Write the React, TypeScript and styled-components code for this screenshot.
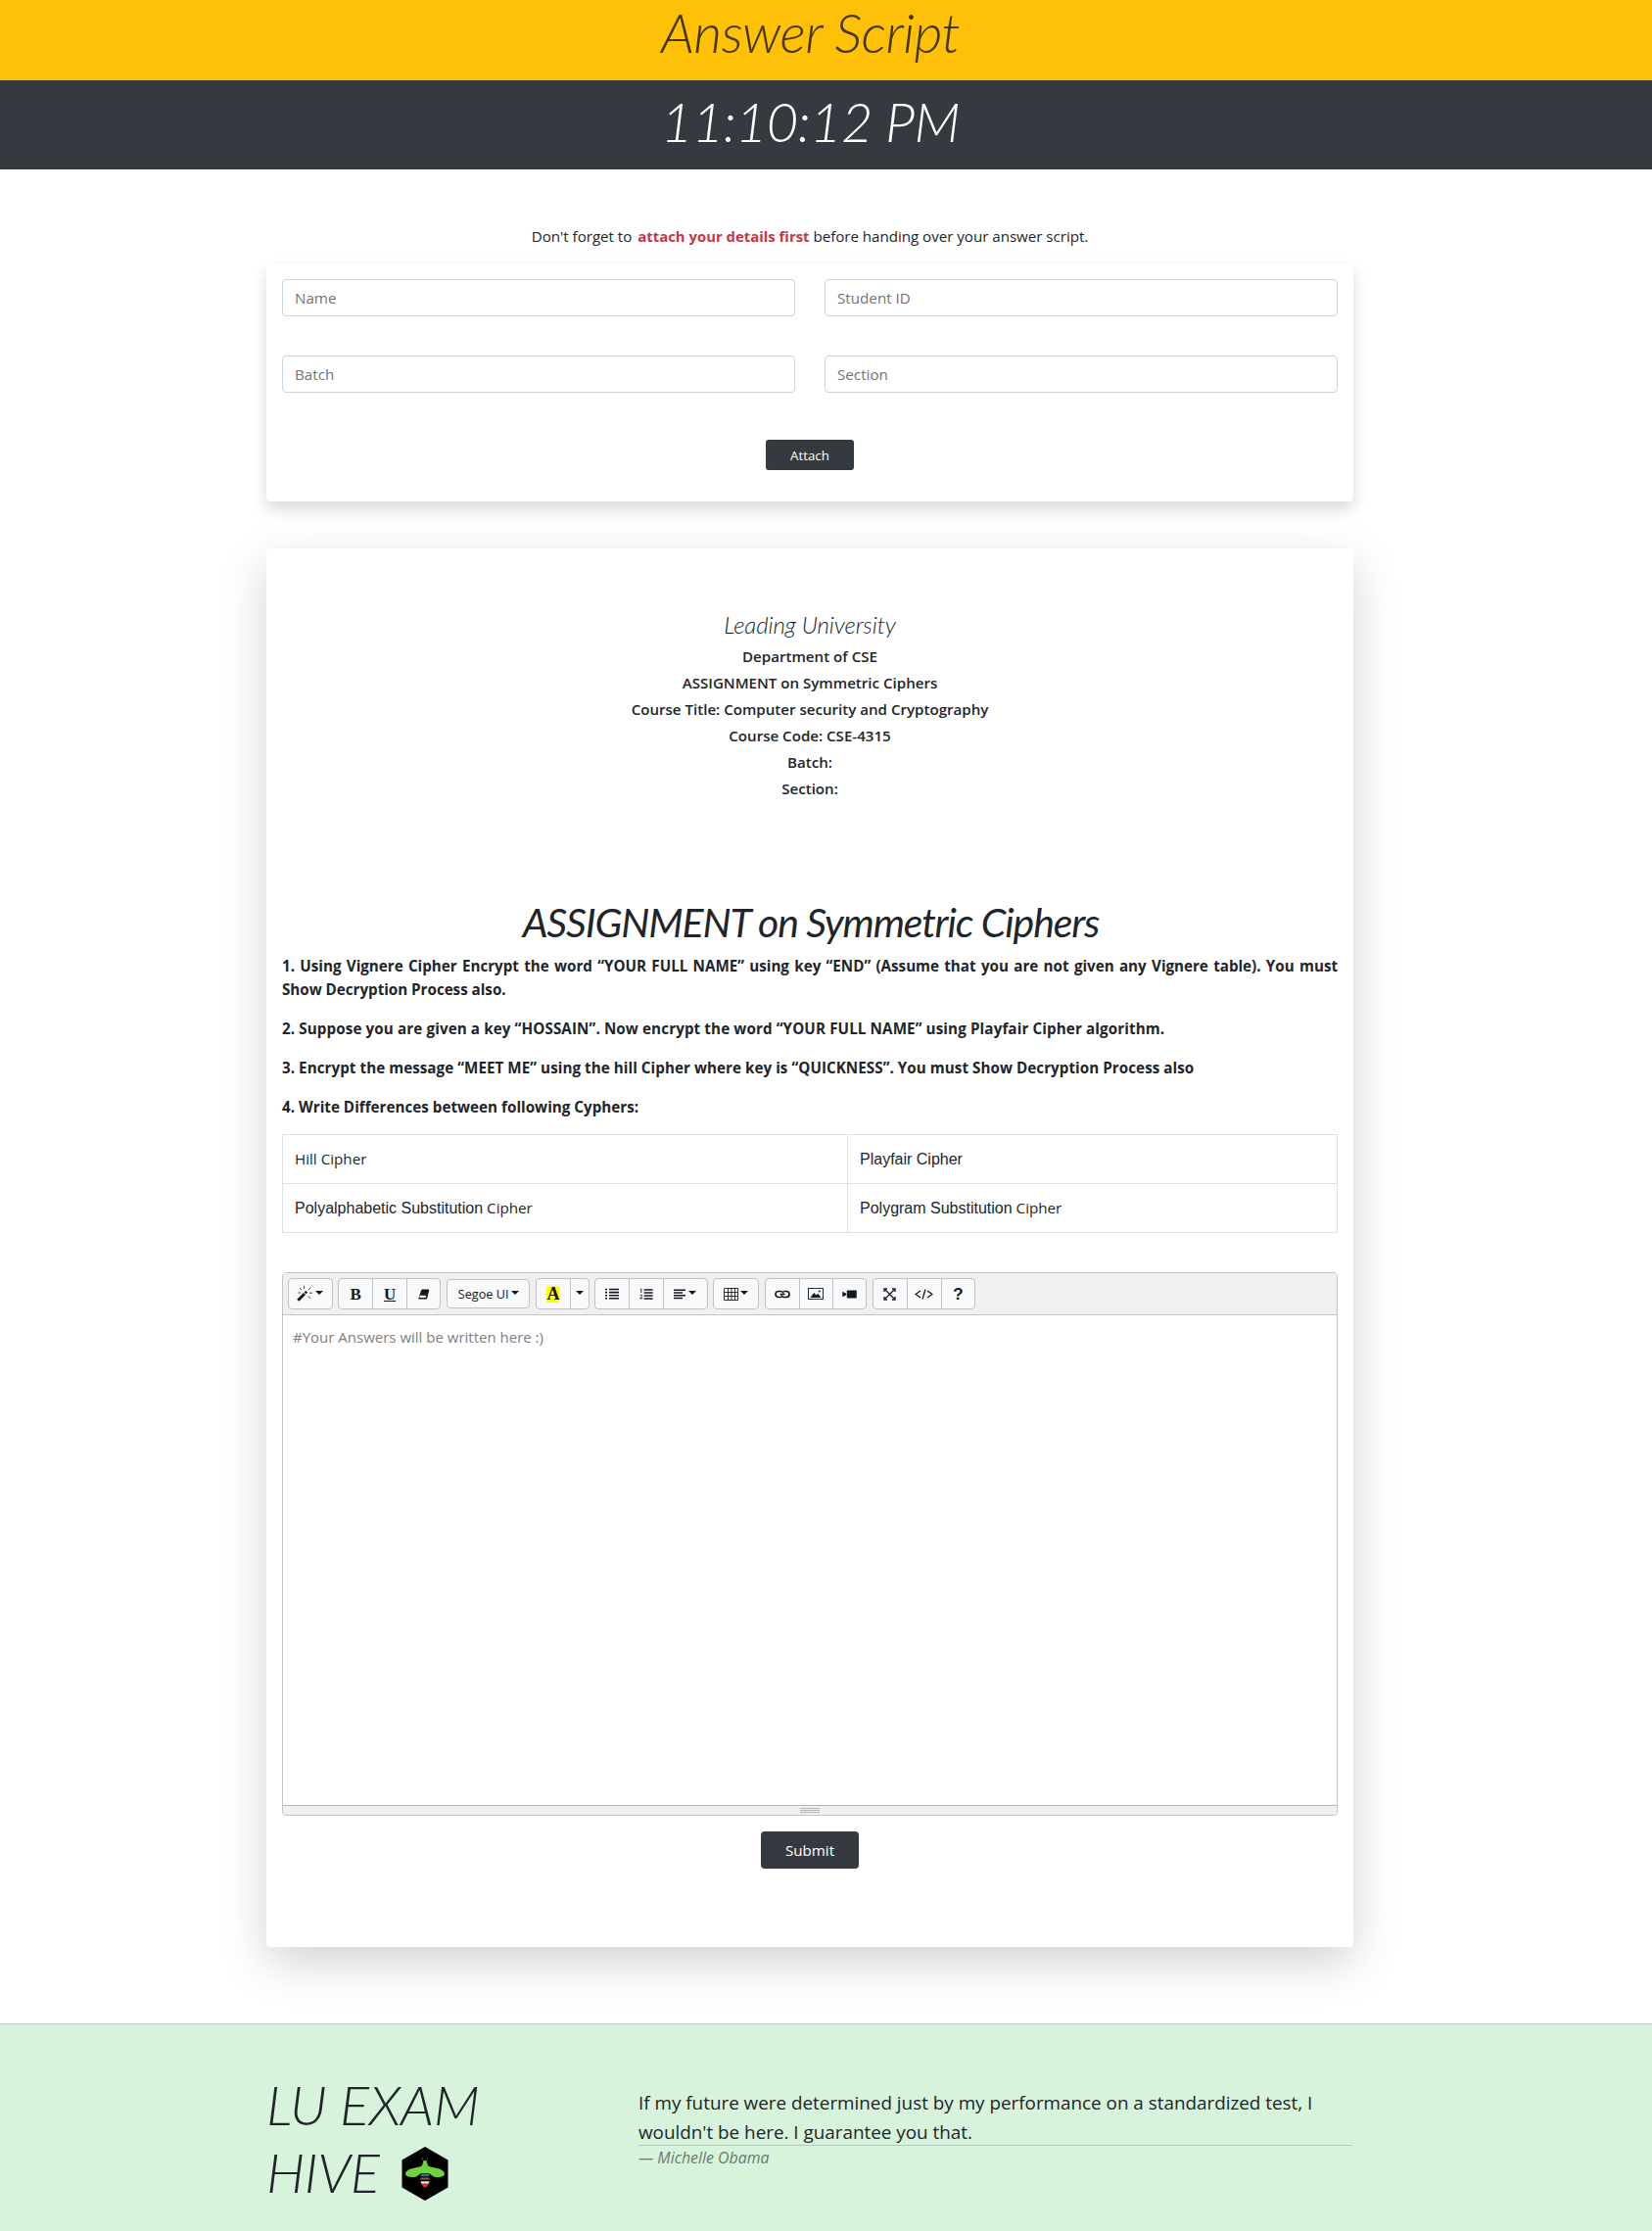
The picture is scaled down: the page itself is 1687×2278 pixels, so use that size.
import React from "react";
import styled, { createGlobalStyle } from "styled-components";

const sans = `"Open Sans", "Noto Sans", sans-serif`;
const display = `Lato, "Open Sans", sans-serif`;

const GlobalStyle = createGlobalStyle`
  *, *::before, *::after { box-sizing: border-box; }
  body {
    margin: 0;
    background: #fff;
    color: #212529;
    font: 400 15.2px/24px ${sans};
  }
  h1, h2, h3, h4, h5, h6, p { margin: 0; }
`;

const Page = styled.div`
  width: 100%;
  min-height: 2278px;
  display: flex;
  flex-direction: column;
`;

const Band = styled.header<{ $tone: "warning" | "dark" }>`
  height: ${(p) => (p.$tone === "dark" ? 91 : 82)}px;
  padding: ${(p) => (p.$tone === "dark" ? "8px" : "1px")} 32px 0 0;
  background: ${(p) => (p.$tone === "dark" ? "#343a40" : "#ffc107")};
  color: ${(p) => (p.$tone === "dark" ? "#fff" : "#443608")};
  text-align: center;
`;

const BandTitle = styled.h1<{ $line: number; $track: number }>`
  font: italic 300 56px/${(p) => p.$line}px ${display};
  letter-spacing: ${(p) => p.$track}px;
`;

const Container = styled.main`
  width: 1110px;
  margin-left: 272px;
  display: flex;
  flex-direction: column;
`;

const Notice = styled.p`
  margin: 56px 0 16px;
  text-align: center;
  white-space: nowrap;
  letter-spacing: -0.05px;
  strong {
    margin-left: 2px;
    color: #c73546;
    font-size: 14.9px;
    letter-spacing: 0;
  }
`;

const DetailsCard = styled.form`
  padding: 16px 16px 32px;
  border-radius: 4px;
  box-shadow: 0 8px 16px rgba(0, 0, 0, 0.15);
  display: flex;
  flex-direction: column;
  align-items: center;
`;

const Fields = styled.div`
  width: 100%;
  display: grid;
  grid-template-columns: 1fr 1fr;
  gap: 40px 30px;
  margin-bottom: 48px;
`;

const Field = styled.input`
  width: 100%;
  height: 38px;
  padding: 6px 12px;
  border: 1px solid #ced4da;
  border-radius: 4px;
  background: #fff;
  font: 400 15.2px/24px ${sans};
  &::placeholder { color: #6c757d; opacity: 1; }
`;

const DarkButton = styled.button<{ $small?: boolean }>`
  width: ${(p) => (p.$small ? 90 : 100)}px;
  height: ${(p) => (p.$small ? 31 : 38)}px;
  padding: ${(p) => (p.$small ? "1px 0 0" : 0)};
  border: 0;
  border-radius: ${(p) => (p.$small ? 3 : 4)}px;
  background: #343a40;
  color: #fff;
  font: 400 ${(p) => (p.$small ? 13.3 : 15.2)}px/21px ${sans};
`;

const ScriptCard = styled.section`
  margin: 48px 0 78px;
  padding: 63px 16px 80px;
  background: #fff;
  border-radius: 4px;
  box-shadow: 0 16px 48px rgba(0, 0, 0, 0.175);
  display: flex;
  flex-direction: column;
`;

const University = styled.h4`
  margin-bottom: 5px;
  font: italic 300 24px/29px ${display};
  letter-spacing: -0.1px;
  text-align: center;
`;

const CoverLine = styled.h6`
  font: 600 15.1px/27px ${sans};
  text-align: center;
`;

const AssignmentTitle = styled.h1`
  margin: 99px 0 8px;
  padding-left: 2px;
  font: italic 400 41px/48px ${display};
  letter-spacing: -1.12px;
  text-align: center;
`;

const Question = styled.p<{ $track?: number }>`
  margin-bottom: 16px;
  font-weight: 700;
  letter-spacing: ${(p) => p.$track ?? 0}px;
  text-align: justify;
`;

const CipherTable = styled.table`
  width: 1078px;
  height: 101px;
  margin-bottom: 40px;
  border-collapse: collapse;
  table-layout: fixed;
`;

const Cell = styled.td<{ $width?: number }>`
  ${(p) => p.$width && `width: ${p.$width}px;`}
  padding: 12px;
  border: 1px solid #dee2e6;
  vertical-align: baseline;
`;

const Arial = styled.span`
  font: 400 16px/24px "Liberation Sans", Arial, sans-serif;
`;

const Editor = styled.div`
  height: 555px;
  margin-bottom: 16px;
  border: 1px solid #c4c4c4;
  border-radius: 4px;
  display: flex;
  flex-direction: column;
  overflow: hidden;
`;

const Toolbar = styled.div`
  height: 43px;
  flex: none;
  padding: 0 5px;
  background: #f0f0f0;
  border-bottom: 1px solid #c4c4c4;
  display: flex;
  align-items: center;
  gap: 5.6px;
`;

const Group = styled.div`
  display: flex;
  border: 1px solid #bfc3c6;
  border-radius: 4px;
  background: #f8f9fa;
  overflow: hidden;
`;

const Tool = styled.button<{ $width: number; $short?: boolean }>`
  width: ${(p) => p.$width}px;
  height: ${(p) => (p.$short ? 28 : 30)}px;
  padding: 0;
  border: 0;
  background: none;
  color: #16191c;
  font: 400 12.7px/20px ${sans};
  display: flex;
  align-items: center;
  justify-content: center;
  gap: 2px;
  & + & { border-left: 1px solid #bfc3c6; }
`;

const Glyph = styled.span<{ $underline?: boolean; $mark?: boolean; $sans?: boolean }>`
  font: 700 ${(p) => (p.$mark ? 18 : 17)}px/17px ${(p) => (p.$sans ? `"Liberation Sans", Arial, sans-serif` : `"Liberation Serif", "Times New Roman", serif`)};
  ${(p) => p.$underline && "text-decoration: underline; text-decoration-thickness: 1px; text-underline-offset: 1px;"}
  ${(p) => p.$mark && "background: #ff0;"}
`;

const Caret = styled.i`
  margin-top: -3px;
  border: 4px solid transparent;
  border-top: 4px solid currentColor;
  border-bottom: 0;
`;

const Writing = styled.div`
  flex: 1;
  padding: 10px;
  color: #808080;
  font-size: 15px;
  line-height: 24px;
`;

const StatusBar = styled.div`
  height: 10.5px;
  flex: none;
  background: #f0f0f0;
  border-top: 1px solid #b5b5b5;
  display: flex;
  flex-direction: column;
  align-items: center;
  padding-top: 2px;
  gap: 1px;
`;

const Grip = styled.span`
  width: 20px;
  height: 1px;
  background: #b5b5b5;
  flex: none;
`;

const SubmitRow = styled.div`
  display: flex;
  justify-content: center;
`;

const Footer = styled.footer`
  height: 212px;
  padding: 46px 0 0 272px;
  background: #d7f3dc;
  border-top: 1px solid #c6d1c8;
  display: flex;
`;

const Brand = styled.h1`
  width: 380px;
  padding-top: 1px;
  font: italic 300 56px/69.3px ${display};
  letter-spacing: -0.45px;
`;

const Bee = styled.svg`
  width: 48px;
  height: 55px;
  margin-left: 23px;
  vertical-align: -8px;
`;

const Quote = styled.blockquote`
  width: 729px;
  margin: 20px 0 0;
  font-size: 18.85px;
  line-height: 29.5px;
`;

const Rule = styled.div`
  height: 1px;
  margin-top: -2px;
  background: #b4cdb8;
`;

const Author = styled.cite`
  display: block;
  color: #6c7a72;
  font: italic 400 15.9px/24px ${sans};
`;

const icon = { fill: "none", stroke: "currentColor" };

const WandIcon = () => (
  <svg width="17" height="16" viewBox="0 0 17 16" {...icon}>
    <path d="M1.3 14.7 8 8" strokeWidth="3" />
    <path d="M8.6 7.4 10.2 5.8" strokeWidth="2.6" />
    <path d="M7.5 0v3M3 2l1.800 2M1.500 7h2.400M12.200 3.800 14.400 1.600M13 7.200h3M12 10.500l2 2.400" strokeWidth=".8" />
  </svg>
);
const EraserIcon = () => (
  <svg width="12" height="11" viewBox="0 0 12 11">
    <path d="M3.8 1h7L8.6 10H.8z" fill="currentColor" stroke="currentColor" strokeLinejoin="round" />
    <path d="M1.9 6.8h6.3l-.6 2.3H1.3z" fill="#f8f9fa" />
  </svg>
);
const BulletsIcon = () => (
  <svg width="14" height="12" viewBox="0 0 14 12" {...icon}>
    <path d="M0 1.5h2M0 4.6h2M0 7.7h2M0 10.8h2M4 1.5h10M4 4.6h10M4 7.7h10M4 10.8h10" strokeWidth="1.6" />
  </svg>
);
const NumbersIcon = () => (
  <svg width="14" height="13" viewBox="0 0 14 13" {...icon}>
    <path d="M4.6 2h9M4.6 5h9M4.6 8h9M4.6 11h9" strokeWidth="1.7" />
    <path d="M.8 1.6 1.9 1v4M.5 7.9c.5-1 2.5-.9 2.2.3-.2.9-1.4 1.6-2.1 2.6h2.6" strokeWidth=".9" />
  </svg>
);
const AlignIcon = () => (
  <svg width="13" height="11" viewBox="0 0 13 11" {...icon}>
    <path d="M0 1.2h12M0 4h9M0 6.8h12M0 9.6h9" strokeWidth="1.5" />
  </svg>
);
const TableIcon = () => (
  <svg width="15" height="13" viewBox="0 0 15 13" {...icon}>
    <path d="M.5.5h14v12H.5zM.5 4.5h14M.5 8.5h14M4.5.5v12M8 .5v12M11.5.5v12" strokeWidth=".9" />
  </svg>
);
const LinkIcon = () => (
  <svg width="16" height="9" viewBox="0 0 16 9" {...icon} strokeWidth="1.7">
    <path d="M6.800 7.500H4a3 3 0 0 1 0-6h2.500q2 0 2.500 2M9.200 1.500H12a3 3 0 0 1 0 6H9.500q-2 0-2.500-2" />
    <path d="M5.500 4.500h5" strokeWidth="1.300" />
  </svg>
);
const PictureIcon = () => (
  <svg width="16" height="12" viewBox="0 0 16 12">
    <rect x=".5" y=".5" width="15" height="11" fill="none" stroke="currentColor" strokeWidth=".9" />
    <path d="m2.500 10 3.700-5 2.300 2.600 1.800-1.800 3.200 4.200z" fill="currentColor" />
    <circle cx="11.800" cy="3.500" r="1" fill="currentColor" />
  </svg>
);
const VideoIcon = () => (
  <svg width="15" height="9" viewBox="0 0 15 9" fill="currentColor">
    <rect x="4.800" y=".5" width="10" height="8" rx=".8" />
    <path d="M.3 1.800 4.200 3.800v1.400L.3 7.200z" />
  </svg>
);
const FullIcon = () => (
  <svg width="13" height="13" viewBox="0 0 13 13" {...icon}>
    <path d="m2 2 9 9M11 2l-9 9" strokeWidth="1.200" />
    <path d="M1 4V1h3M9 1h3v3M12 9v3H9M4 12H1V9" strokeWidth="1.400" />
  </svg>
);
const CodeIcon = () => (
  <svg width="19" height="11" viewBox="0 0 19 11" {...icon} strokeWidth="1.300">
    <path d="M6 2 1 5.500 6 9M13 2l5 3.500L13 9M11 .5l-3 10" />
  </svg>
);

const BeeLogo = () => (
  <Bee viewBox="0 0 48 55">
    <path d="M24 0 47.500 13.500v28L24 55 .5 41.500v-28z" fill="#000" />
    <path d="M21 11q.3 2.500 2 4M26.500 11q-.3 2.500-1.800 4" fill="none" stroke="#4c8b2f" strokeWidth=".7" />
    <path d="M24 14c2 0 2.300 2 2.500 4 .4 1.800 2.500 2.500 5.500 3 6 1 12 3 12 6.500 0 3.600-7.500 4.500-11.500 2.700-2-1-3.200-2.600-5-3.200h-7c-1.800.6-3 2.200-5 3.200-4 1.800-11.500.9-11.500-2.700 0-3.500 6-5.500 12-6.500 3-.5 5.100-1.200 5.500-3 .2-2 .5-4 2.500-4z" fill="#6fd13f" />
    <path d="M19.800 27.500h8.400l.4 2.700h-9.200z" fill="#2d6d96" />
    <path d="M19.400 31.500h9.200v2.200h-9.200z" fill="#8a572f" />
    <path d="M19.500 35.200h9l-.6 2.500h-7.800z" fill="#f0d9dc" />
    <path d="M20.300 37.700h7.400L26 40.400l-2 1-2-1z" fill="#d23138" />
  </Bee>
);

const cover = [
  "Department of CSE",
  "ASSIGNMENT on Symmetric Ciphers",
  "Course Title: Computer security and Cryptography",
  "Course Code: CSE-4315",
  "Batch:",
  "Section:",
];

export default function App() {
  return (
    <Page>
      <GlobalStyle />
      <Band $tone="warning">
        <BandTitle $line={64} $track={-0.6}>Answer Script</BandTitle>
      </Band>
      <Band $tone="dark">
        <BandTitle as="h2" $line={67} $track={-0.7}>11:10:12 PM</BandTitle>
      </Band>

      <Container>
        <Notice>
          Don't forget to <strong>attach your details first</strong> before handing over your answer script.
        </Notice>
        <DetailsCard>
          <Fields>
            <Field placeholder="Name" />
            <Field placeholder="Student ID" />
            <Field placeholder="Batch" />
            <Field placeholder="Section" />
          </Fields>
          <DarkButton type="button" $small>Attach</DarkButton>
        </DetailsCard>

        <ScriptCard>
          <University>Leading University</University>
          {cover.map((line) => <CoverLine key={line}>{line}</CoverLine>)}

          <AssignmentTitle>ASSIGNMENT on Symmetric Ciphers</AssignmentTitle>
          <Question $track={-0.02}>
            1. Using Vignere Cipher Encrypt the word “YOUR FULL NAME” using key “END” (Assume that you are not given any Vignere table). You must Show Decryption Process also.
          </Question>
          <Question $track={0.11}>2. Suppose you are given a key “HOSSAIN”. Now encrypt the word “YOUR FULL NAME” using Playfair Cipher algorithm.</Question>
          <Question $track={0.05}>3. Encrypt the message “MEET ME” using the hill Cipher where key is “QUICKNESS”. You must Show Decryption Process also</Question>
          <Question $track={0.02}>4. Write Differences between following Cyphers:</Question>

          <CipherTable>
            <tbody>
              <tr>
                <Cell $width={577}>Hill Cipher</Cell>
                <Cell><Arial>Playfair Cipher</Arial></Cell>
              </tr>
              <tr>
                <Cell><Arial>Polyalphabetic Substitution</Arial> Cipher</Cell>
                <Cell><Arial>Polygram Substitution</Arial> Cipher</Cell>
              </tr>
            </tbody>
          </CipherTable>

          <Editor>
            <Toolbar>
              <Group><Tool $width={43.7}><WandIcon /><Caret /></Tool></Group>
              <Group>
                <Tool $width={34}><Glyph>B</Glyph></Tool>
                <Tool $width={34.5}><Glyph $underline>U</Glyph></Tool>
                <Tool $width={34.5}><EraserIcon /></Tool>
              </Group>
              <Group><Tool $width={83.5} $short>Segoe UI<Caret /></Tool></Group>
              <Group>
                <Tool $width={34}><Glyph $mark>A</Glyph></Tool>
                <Tool $width={18.7}><Caret /></Tool>
              </Group>
              <Group>
                <Tool $width={33.5}><BulletsIcon /></Tool>
                <Tool $width={35}><NumbersIcon /></Tool>
                <Tool $width={45}><AlignIcon /><Caret /></Tool>
              </Group>
              <Group><Tool $width={44.7}><TableIcon /><Caret /></Tool></Group>
              <Group>
                <Tool $width={34}><LinkIcon /></Tool>
                <Tool $width={34.5}><PictureIcon /></Tool>
                <Tool $width={34}><VideoIcon /></Tool>
              </Group>
              <Group>
                <Tool $width={34}><FullIcon /></Tool>
                <Tool $width={35}><CodeIcon /></Tool>
                <Tool $width={34.5}><Glyph $sans>?</Glyph></Tool>
              </Group>
            </Toolbar>
            <Writing>#Your Answers will be written here :)</Writing>
            <StatusBar><Grip /><Grip /><Grip /></StatusBar>
          </Editor>

          <SubmitRow><DarkButton type="button">Submit</DarkButton></SubmitRow>
        </ScriptCard>
      </Container>

      <Footer>
        <Brand>
          LU EXAM<br />HIVE<BeeLogo />
        </Brand>
        <Quote>
          If my future were determined just by my performance on a standardized test, I<br />
          wouldn't be here. I guarantee you that.
          <Rule />
          <Author>— Michelle Obama</Author>
        </Quote>
      </Footer>
    </Page>
  );
}
